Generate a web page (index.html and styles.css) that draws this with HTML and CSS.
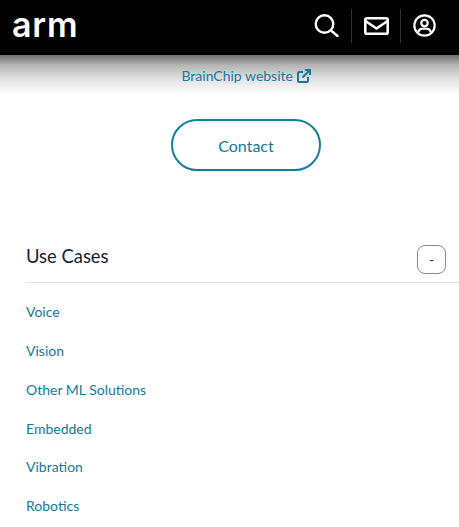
FILE: index.html
```html
<!DOCTYPE html>
<html lang="en">
<head>
    <meta charset="UTF-8">
    <meta name="viewport" content="width=device-width, initial-scale=1.0">
    <title>BrainChip</title>
    <link rel="stylesheet" href="styles.css">
</head>
<body>
    <div id="header">
        <div class="logo">arm</div>
        <div class="header-icons">
            <a class="icon-btn" href="#">
                <svg width="25" height="23" viewBox="0 0 25 23" fill="none" stroke="#fff" stroke-width="2.4">
                    <circle cx="10.5" cy="10" r="8.8"/>
                    <path d="M17 16.5 L23.5 22" stroke-linecap="round"/>
                </svg>
            </a>
            <a class="icon-btn" href="#">
                <svg width="25" height="18" viewBox="0 0 25 18" fill="none" stroke="#fff" stroke-width="2.6">
                    <rect x="1.3" y="1.3" width="22.4" height="15.4" rx="1.5"/>
                    <path d="M1.5 4 L12.5 11.5 L23.5 4"/>
                </svg>
            </a>
            <a class="icon-btn" href="#">
                <svg width="23" height="23" viewBox="0 0 24 24" fill="none" stroke="#fff" stroke-width="2.3">
                    <circle cx="12" cy="12" r="10.6"/>
                    <circle cx="12" cy="9.5" r="3.4"/>
                    <path d="M5.5 19 C6 16 8 15.4 9.5 15.4 H14.5 C16 15.4 18 16 18.5 19"/>
                </svg>
            </a>
        </div>
    </div>
    <div class="shade">
        <a class="site-link" href="#">BrainChip website
            <svg width="14" height="14" viewBox="0 0 14 14" fill="none" stroke="#147a9c" stroke-width="2">
                <path d="M11 8 V12 a1 1 0 0 1 -1 1 H2 a1 1 0 0 1 -1 -1 V4 a1 1 0 0 1 1 -1 H6"/>
                <path d="M5.5 8.5 L12.5 1.5 M8 1 H13 V6"/>
            </svg>
        </a>
    </div>
    <div class="contact-box">
        <a class="contact-btn" href="#">Contact</a>
    </div>
    <div class="section">
        <div class="section-head">
            <h2>Use Cases</h2>
            <button class="toggle">-</button>
        </div>
        <ul class="case-list">
            <li><a href="#">Voice</a></li>
            <li><a href="#">Vision</a></li>
            <li><a href="#">Other ML Solutions</a></li>
            <li><a href="#">Embedded</a></li>
            <li><a href="#">Vibration</a></li>
            <li><a href="#">Robotics</a></li>
        </ul>
    </div>
</body>
</html>
```

FILE: styles.css
```css
* { margin:0; padding:0; box-sizing: border-box; }
html, body {
    height: 527px;
    overflow: hidden;
}
body {
    font-family: "Lato", sans-serif;
    background-color: #fff;
    color: #11809f;
}
a {
    color: #147a9c;
    text-decoration: none;
}
#header {
    height: 55px;
    background-color: #000;
    display: flex;
    justify-content: space-between;
    align-items: center;
    padding: 0 10px 4px 12px;
}
.logo {
    font-family: "Inter", sans-serif;
    font-size: 34px;
    font-weight: 600;
    letter-spacing: 0.8px;
    color: #fff;
    line-height: 50px;
    margin-bottom: 2px;
}
.header-icons {
    display: flex;
    align-items: center;
}
.icon-btn {
    display: flex;
    align-items: center;
    justify-content: center;
    height: 34px;
    width: 49px;
    border-left: 1px solid #333;
}
.icon-btn:first-child {
    border-left: none;
}
.icon-btn:last-child {
    padding-right: 2px;
}
.shade {
    height: 40px;
    padding-left: 33px;
    background: linear-gradient(#6e6e6e 0, #b4b4b4 25%, #e2e2e2 60%, #fff 100%);
    text-align: center;
    font-size: 14px;
    line-height: 42px;
}
.site-link svg {
    vertical-align: -2px;
}
.contact-box {
    display: flex;
    justify-content: center;
    padding: 24px 0 0 33px;
}
.contact-btn {
    display: block;
    width: 150px;
    height: 52px;
    line-height: 49px;
    text-align: center;
    font-size: 16px;
    border: 2px solid #11809f;
    border-radius: 26px;
}
.section {
    padding: 0 0 0 26px;
    margin-top: 66px;
}
.section-head {
    display: flex;
    justify-content: space-between;
    align-items: center;
    height: 46px;
    padding-right: 13px;
    border-bottom: 1px solid #e6e8e8;
}
.section-head h2 {
    font-size: 18.4px;
    font-weight: 400;
    color: #0f2338;
    margin-bottom: 8px;
}
.toggle {
    width: 29px;
    height: 29px;
    background: #fff;
    border: 1px solid #858a8e;
    border-radius: 8px;
    font-family: "Lato", sans-serif;
    font-size: 14px;
    color: #333;
}
.case-list {
    list-style: none;
    padding-top: 10.3px;
}
.case-list li {
    font-size: 14px;
    height: 38.8px;
    line-height: 38.8px;
}
```
